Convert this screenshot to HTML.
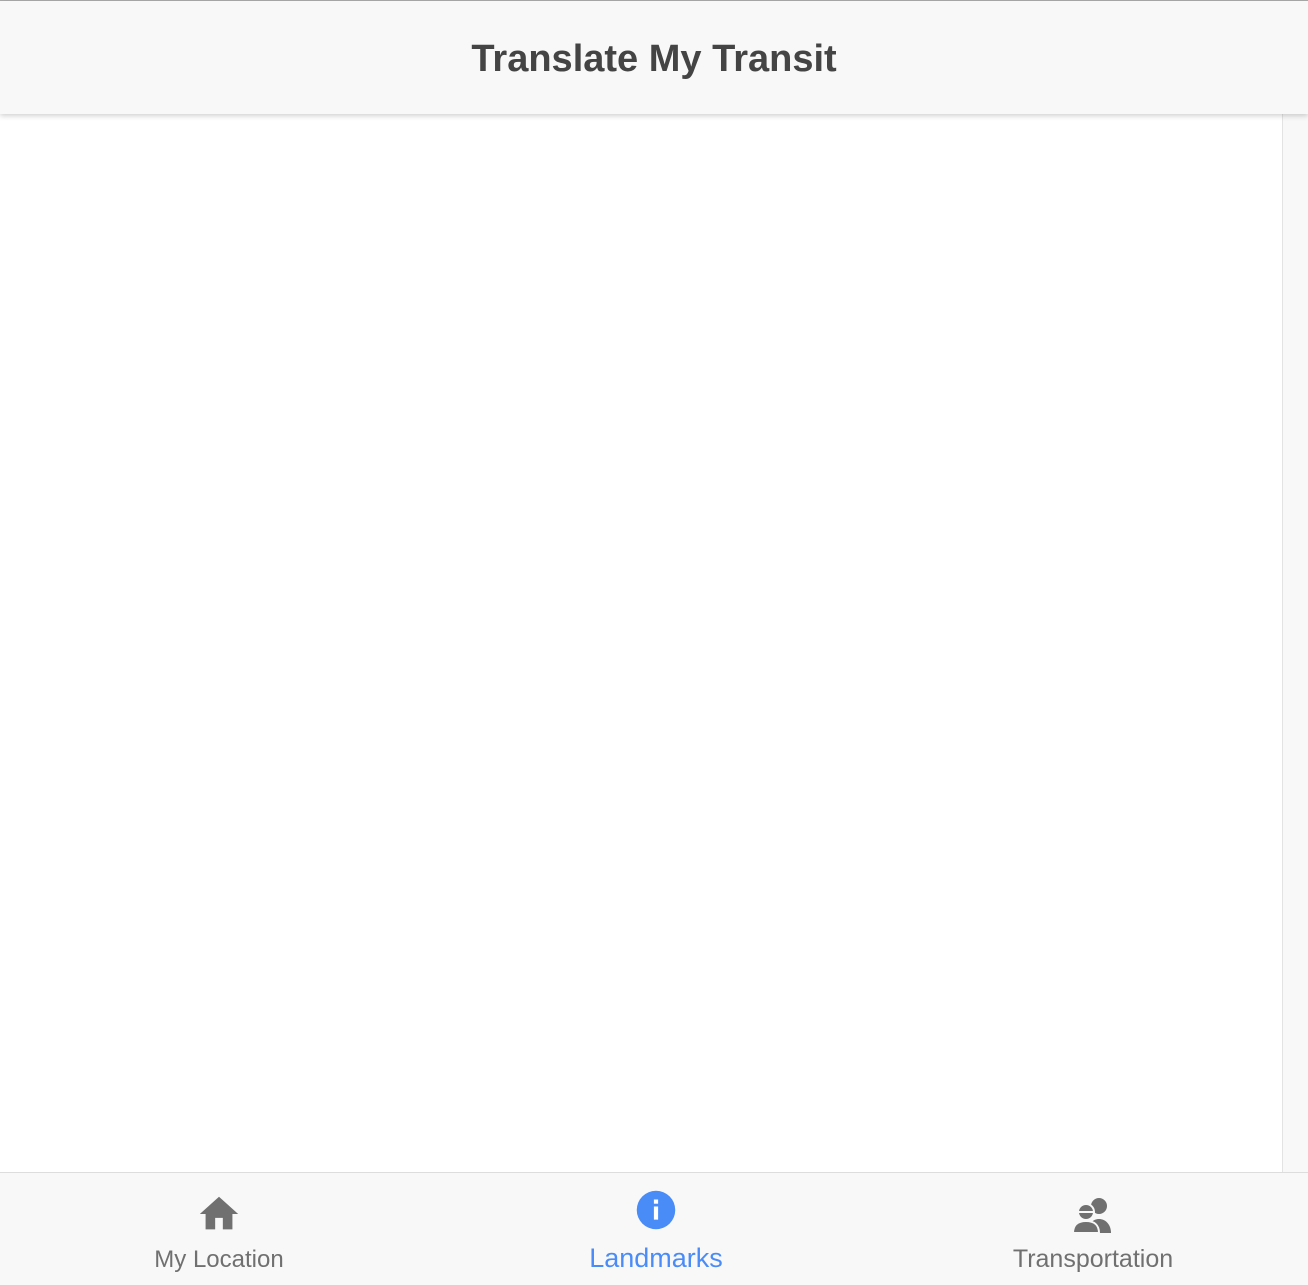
<!DOCTYPE html>
<html><head><style>
body{margin:0;width:1308px;height:1284px;position:relative;overflow:hidden;background:#fff;font-family:"Liberation Sans",sans-serif}
.top{position:absolute;left:0;top:0;width:1308px;height:1px;background:#aaa}
.hdr{position:absolute;left:0;top:1px;width:1308px;height:113px;background:#f8f8f8;box-shadow:0 2px 5px rgba(0,0,0,.18);z-index:2}
.hdr h1{margin:0;text-align:center;line-height:117px;font-size:38px;font-weight:bold;color:#444;letter-spacing:0px}
.sb{position:absolute;left:1282px;top:114px;width:26px;height:1060px;background:#f8f8f8;border-left:1px solid #e3e3e3}
.tab{position:absolute;left:0;top:1172px;width:1308px;height:112px;background:#f8f8f8;border-top:1px solid #ddd;z-index:2}
.lbl{position:absolute;top:73px;width:300px;text-align:center;font-size:24px;color:#707070}
svg{position:absolute}
</style></head><body>
<div class="top"></div>
<div class="hdr"><h1>Translate My Transit</h1></div>
<div class="sb"></div>
<div class="tab">
<svg style="left:195px;top:18px" width="48" height="46" viewBox="0 0 24 24"><path fill="#707070" d="M10 20v-6h4v6h5v-8h3L12 3 2 12h3v8z"/></svg>
<div class="lbl" style="left:69px">My Location</div>
<svg style="left:635px;top:16px" width="42" height="42" viewBox="0 0 24 24"><circle cx="12" cy="12" r="11" fill="#4a8cf7"/><rect x="10.8" y="10" width="2.4" height="7.5" fill="#fff"/><rect x="10.8" y="6" width="2.4" height="2.4" fill="#fff"/></svg>
<div class="lbl" style="left:506px;color:#4a8cf7;font-size:27px;top:70px">Landmarks</div>
<svg style="left:1072px;top:22px" width="42" height="40" viewBox="0 0 42 40"><circle cx="27" cy="11" r="8" fill="#707070"/><path d="M16 38c0-9 5-14 11-14s12 5 12 14z" fill="#707070"/><circle cx="14" cy="17" r="8" fill="#707070" stroke="#f8f8f8" stroke-width="2"/><path d="M7 17h14" stroke="#f8f8f8" stroke-width="2"/><path d="M1 38c0-8 5-12 13-12s13 4 13 12z" fill="#707070" stroke="#f8f8f8" stroke-width="2"/></svg>
<div class="lbl" style="left:943px;font-size:25px;top:72px">Transportation</div>
</div>
</body></html>
